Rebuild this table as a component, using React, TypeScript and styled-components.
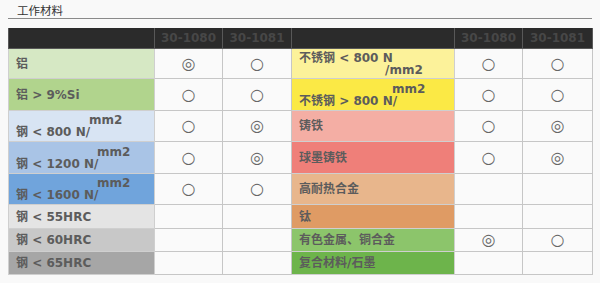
import * as React from 'react'
import styled, { createGlobalStyle } from 'styled-components'

const Global = createGlobalStyle`
  body {
    margin: 0;
    background: #f9f9f9;
    font-family: "DejaVu Sans", "Noto Sans CJK SC", sans-serif;
  }
`

const Page = styled.div`
  padding: 0 8px;
`

const TitleBar = styled.div`
  height: 18px;
  border-bottom: 1px solid #8a8a8a;
  margin-bottom: 9px;
  padding-left: 9px;
  display: flex;
  align-items: flex-end;
`

const Title = styled.h3`
  margin: 0;
  font-size: 11.5px;
  font-weight: normal;
  color: #333;
  font-family: "Noto Sans CJK SC", sans-serif;
  line-height: 14px;
  padding-bottom: 1px;
`

const Table = styled.table`
  width: 584px;
  border-collapse: collapse;
  table-layout: fixed;
`

const HeadCell = styled.th`
  background: #2b2b2b;
  color: #474747;
  font-size: 12px;
  font-weight: bold;
  height: 20px;
  padding: 0;
  border: 1px solid #585858;
  border-top: none;
`

const Row = styled.tr<{ $h: number }>`
  height: ${(p) => p.$h}px;
`

const LabelCell = styled.td<{ $bg: string }>`
  background: ${(p) => p.$bg};
  color: #5c5c5c;
  font-size: 12px;
  font-weight: bold;
  padding: 0 0 0 7px;
  border: 1px solid #cfcfcf;
  white-space: nowrap;
  line-height: 12px;
`

const MarkCell = styled.td`
  background: #fafafa;
  border: 1px solid #c6c6c6;
  text-align: center;
  padding: 0;
  color: #666;
  font-size: 16px;
  line-height: 14px;
`

const Line = styled.div<{ $indent?: number }>`
  padding-left: ${(p) => p.$indent || 0}px;
`

type Mark = '' | 'o' | 'oo'

interface Label {
  text: string
  bg: string
  unit?: 'above' | 'below'
  indent?: number
}

const Cell: React.FC<{ label: Label }> = ({ label }) => {
  if (label.unit === 'above') {
    return (
      <LabelCell $bg={label.bg}>
        <Line $indent={label.indent}>mm2</Line>
        <Line>{label.text}</Line>
      </LabelCell>
    )
  }
  if (label.unit === 'below') {
    return (
      <LabelCell $bg={label.bg}>
        <Line>{label.text}</Line>
        <Line $indent={label.indent}>/mm2</Line>
      </LabelCell>
    )
  }
  return <LabelCell $bg={label.bg}>{label.text}</LabelCell>
}

const sym = (m: Mark) => (m === 'oo' ? '◎' : m === 'o' ? '○' : '')

const rows: { h: number; left: Label; lm: Mark[]; right: Label; rm: Mark[] }[] = [
  { h: 30, left: { text: '铝', bg: '#d6e8c4' }, lm: ['oo', 'o'], right: { text: '不锈钢 < 800 N', bg: '#fcf29a', unit: 'below', indent: 86 }, rm: ['o', 'o'] },
  { h: 32, left: { text: '铝 > 9%Si', bg: '#b1d48d' }, lm: ['o', 'o'], right: { text: '不锈钢 > 800 N/', bg: '#fbe945', unit: 'above', indent: 93 }, rm: ['o', 'o'] },
  { h: 31, left: { text: '钢 < 800 N/', bg: '#d8e4f3', unit: 'above', indent: 73 }, lm: ['o', 'oo'], right: { text: '铸铁', bg: '#f4aea4' }, rm: ['o', 'oo'] },
  { h: 32, left: { text: '钢 < 1200 N/', bg: '#a9c4e6', unit: 'above', indent: 81 }, lm: ['o', 'oo'], right: { text: '球墨铸铁', bg: '#ef7f79' }, rm: ['o', 'oo'] },
  { h: 31, left: { text: '钢 < 1600 N/', bg: '#70a4dc', unit: 'above', indent: 81 }, lm: ['o', 'o'], right: { text: '高耐热合金', bg: '#e8b68c' }, rm: ['', ''] },
  { h: 24, left: { text: '钢 < 55HRC', bg: '#e4e4e4' }, lm: ['', ''], right: { text: '钛', bg: '#df9b64' }, rm: ['', ''] },
  { h: 23, left: { text: '钢 < 60HRC', bg: '#c8c8c8' }, lm: ['', ''], right: { text: '有色金属、铜合金', bg: '#8cc56b' }, rm: ['oo', 'o'] },
  { h: 23, left: { text: '钢 < 65HRC', bg: '#a6a6a6' }, lm: ['', ''], right: { text: '复合材料/石墨', bg: '#6db44b' }, rm: ['', ''] },
]

export default function App() {
  return (
    <Page>
      <Global />
      <TitleBar>
        <Title>工作材料</Title>
      </TitleBar>
      <Table>
        <colgroup>
          <col style={{ width: 146 }} />
          <col style={{ width: 68 }} />
          <col style={{ width: 69 }} />
          <col style={{ width: 163 }} />
          <col style={{ width: 68 }} />
          <col style={{ width: 70 }} />
        </colgroup>
        <thead>
          <tr>
            <HeadCell />
            <HeadCell>30-1080</HeadCell>
            <HeadCell>30-1081</HeadCell>
            <HeadCell />
            <HeadCell>30-1080</HeadCell>
            <HeadCell>30-1081</HeadCell>
          </tr>
        </thead>
        <tbody>
          {rows.map((r, i) => (
            <Row key={i} $h={r.h}>
              <Cell label={r.left} />
              {r.lm.map((m, j) => (
                <MarkCell key={'l' + j}>{sym(m)}</MarkCell>
              ))}
              <Cell label={r.right} />
              {r.rm.map((m, j) => (
                <MarkCell key={'r' + j}>{sym(m)}</MarkCell>
              ))}
            </Row>
          ))}
        </tbody>
      </Table>
    </Page>
  )
}
